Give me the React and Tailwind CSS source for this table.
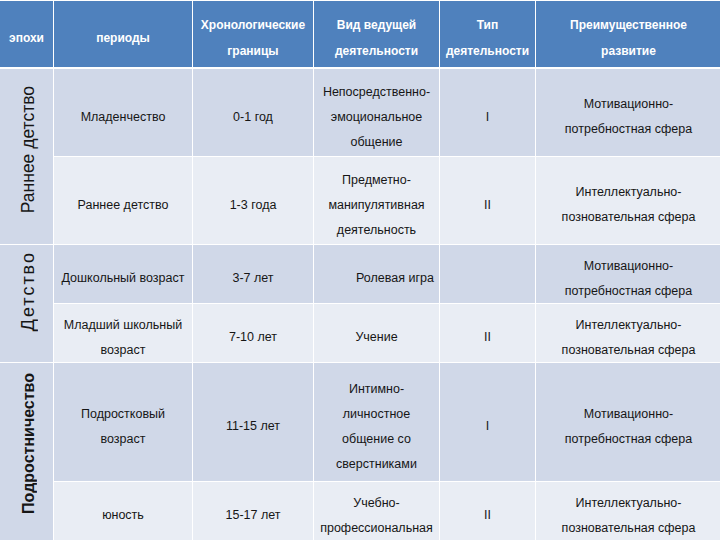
import React from "react";

const font = { fontFamily: '"Liberation Sans", Arial, sans-serif' };

const headers = [
  ["эпохи"],
  ["периоды"],
  ["Хронологические", "границы"],
  ["Вид ведущей", "деятельности"],
  ["Тип", "деятельности"],
  ["Преимущественное", "развитие"],
];

// each row: [period lines, age, activity lines, type, development lines, dark?]
const rows = [
  [["Младенчество"], "0-1 год", ["Непосредственно-", "эмоциональное", "общение"], "I", ["Мотивационно-", "потребностная сфера"], true],
  [["Раннее детство"], "1-3 года", ["Предметно-", "манипулятивная", "деятельность"], "II", ["Интеллектуально-", "позновательная сфера"], false],
  [["Дошкольный возраст"], "3-7 лет", null, "", ["Мотивационно-", "потребностная сфера"], true],
  [["Младший школьный", "возраст"], "7-10 лет", ["Учение"], "II", ["Интеллектуально-", "позновательная сфера"], false],
  [["Подростковый", "возраст"], "11-15 лет", ["Интимно-", "личностное", "общение со", "сверстниками"], "I", ["Мотивационно-", "потребностная сфера"], true],
  [["юность"], "15-17 лет", ["Учебно-", "профессиональная"], "II", ["Интеллектуально-", "позновательная сфера"], false],
];

const Cell = ({ lines, dark }) => (
  <div
    className={`flex flex-col items-center justify-center pt-[9px] text-center text-[12.5px] leading-[25px] text-[#161616] ${
      dark ? "bg-[#d0d8e8]" : "bg-[#e9edf4]"
    }`}
  >
    {lines.map((l, i) => (
      <span key={i} className="whitespace-nowrap">
        {l}
      </span>
    ))}
  </div>
);

const Epoch = ({ label, span, pad, size }) => (
  <div className={`${span} ${pad} flex items-center justify-center bg-[#d0d8e8] pl-[4px]`}>
    <span
      className={`[writing-mode:vertical-rl] rotate-180 whitespace-nowrap text-[#161616] ${size}`}
    >
      {label}
    </span>
  </div>
);

export default function App() {
  return (
    <div className="h-[540px] w-[720px] overflow-hidden bg-white" style={font}>
      <div className="grid grid-cols-[53px_138px_120px_125px_95px_185px] gap-px pt-px">
        {headers.map((h, i) => (
          <div
            key={i}
            className="flex h-[66px] flex-col items-center justify-center pt-[7px] text-center text-[12px] font-bold leading-[26px] text-white bg-[#4f81bd]"
          >
            {h.map((l, j) => (
              <span key={j} className="whitespace-nowrap">
                {l}
              </span>
            ))}
          </div>
        ))}
      </div>

      <div className="mt-[2px] grid grid-cols-[53px_138px_120px_125px_95px_185px] grid-rows-[87px_87px_58px_58px_118px_58px] gap-px">
        <Epoch label="Раннее детство" span="row-span-2" pad="pb-[14px]" size="text-[17.5px]" />
        {rows.slice(0, 2).map((r, i) => (
          <Row key={i} r={r} />
        ))}
        <Epoch label="Детство" span="row-span-2" pad="pb-[24px]" size="text-[18px] tracking-[2px]" />
        {rows.slice(2, 4).map((r, i) => (
          <Row key={i} r={r} />
        ))}
        <Epoch label="Подростничество" span="row-span-2" pad="pb-[16px]" size="text-[16px] font-semibold" />
        {rows.slice(4, 6).map((r, i) => (
          <Row key={i} r={r} />
        ))}
      </div>
    </div>
  );
}

const Row = ({ r }) => {
  const [period, age, activity, type, dev, dark] = r;
  return (
    <>
      <Cell lines={period} dark={dark} />
      <Cell lines={[age]} dark={dark} />
      {activity ? (
        <Cell lines={activity} dark={dark} />
      ) : (
        <div
          className={`flex items-center pl-[42px] pt-[9px] text-[12.5px] text-[#161616] ${
            dark ? "bg-[#d0d8e8]" : "bg-[#e9edf4]"
          }`}
        >
          Ролевая игра
        </div>
      )}
      <Cell lines={[type]} dark={dark} />
      <Cell lines={dev} dark={dark} />
    </>
  );
};
